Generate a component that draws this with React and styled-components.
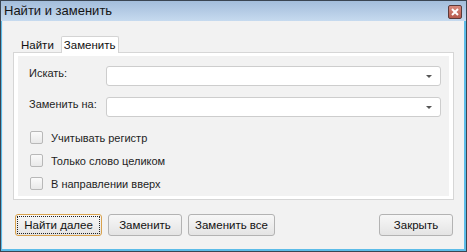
import React from 'react';
import styled, { createGlobalStyle } from 'styled-components';

const Global = createGlobalStyle`
  html, body {
    margin: 0;
    padding: 0;
    background: #f2f2f2;
  }
  body {
    font-family: "Liberation Sans", Arial, sans-serif;
    font-size: 11px;
    color: #1e1e1e;
  }
`;

const Window = styled.div`
  width: 467px;
  height: 252px;
  box-sizing: border-box;
  border: 1px solid #3a4552;
  display: flex;
  flex-direction: column;
  background: #5cbce8;
`;

const TitleBar = styled.div`
  height: 20px;
  flex: none;
  display: flex;
  align-items: center;
  justify-content: space-between;
  padding: 0 4px 0 3px;
  background: linear-gradient(#a3bddb, #c6daef);
`;

const Title = styled.div`
  font-size: 13px;
  color: #141414;
  padding-bottom: 1px;
`;

const CloseBtn = styled.div`
  width: 12px;
  height: 12px;
  margin-top: 2px;
  border: 1px solid #5b3a3a;
  border-radius: 2px;
  background: linear-gradient(#d98a7e, #b55a4c);
  display: flex;
  align-items: center;
  justify-content: center;
`;

const Body = styled.div`
  flex: 1;
  margin: 0 2px 2px 1px;
  background: #f2f2f2;
  border-left: 1px solid #e4ecf4;
  display: flex;
  flex-direction: column;
  padding: 14px 0 0 10px;
`;

const Tabs = styled.div`
  display: flex;
  align-items: flex-end;
  height: 17px;
  padding-left: 1px;
  position: relative;
  z-index: 1;
`;

const Tab = styled.div`
  height: ${p => (p.$active ? '17px' : '15px')};
  box-sizing: border-box;
  padding: ${p => (p.$active ? '1px 2px 0 2px' : '0 6px 0 6px')};
  line-height: 15px;
  font-size: 11.5px;
  background: ${p => (p.$active ? '#ffffff' : 'transparent')};
  border: 1px solid ${p => (p.$active ? '#d4d4d4' : 'transparent')};
  border-bottom: none;
  border-radius: 2px 2px 0 0;
  margin-bottom: ${p => (p.$active ? '-1px' : '0')};
  color: #111;
`;

const Panel = styled.div`
  width: 441px;
  height: 148px;
  box-sizing: border-box;
  border: 1px solid #d6d6d6;
  background: #ffffff;
  padding: 3px 4px 3px 4px;
`;

const Page = styled.div`
  height: 100%;
  background: #f2f2f2;
  box-sizing: border-box;
  padding: 10px 8px 0 11px;
  display: flex;
  flex-direction: column;
`;

const FieldRow = styled.div`
  display: flex;
  align-items: center;
  height: 20px;
  margin-bottom: 11px;
`;

const Label = styled.div`
  width: 77px;
  flex: none;
  padding-bottom: 6px;
`;

const Combo = styled.div`
  flex: 1;
  height: 20px;
  box-sizing: border-box;
  background: #ffffff;
  border: 1px solid #cdcdcd;
  border-radius: 3px;
  display: flex;
  align-items: center;
  justify-content: flex-end;
  padding-right: 8px;
`;

const Arrow = styled.div`
  width: 0;
  height: 0;
  border-left: 3px solid transparent;
  border-right: 3px solid transparent;
  border-top: 3px solid #555;
`;

const Checks = styled.div`
  display: flex;
  flex-direction: column;
  gap: 10px;
  margin-top: 3px;
`;

const CheckRow = styled.label`
  display: flex;
  align-items: center;
  height: 13px;
  gap: 8px;
  padding-left: 1px;
`;

const Box = styled.span`
  width: 11px;
  height: 11px;
  border: 1px solid #b8b8b8;
  border-radius: 2px;
  background: linear-gradient(#fafafa, #e9e9e9);
`;

const Buttons = styled.div`
  display: flex;
  gap: 6px;
  padding: 14px 11px 0 2px;
`;

const Button = styled.div`
  width: ${p => p.$w}px;
  height: 22px;
  box-sizing: border-box;
  border: 1px solid ${p => (p.$focus ? '#d9a24c' : '#b3b3b3')};
  border-radius: 3px;
  background: linear-gradient(#f7f7f7, #e4e4e4);
  display: flex;
  align-items: center;
  justify-content: center;
  position: relative;
  margin-left: ${p => (p.$push ? 'auto' : '0')};
  color: #111;
  font-size: 11.5px;
  &::after {
    content: '';
    display: ${p => (p.$focus ? 'block' : 'none')};
    position: absolute;
    inset: 1px;
    border: 1px dotted #222;
  }
`;

const checks = ['Учитывать регистр', 'Только слово целиком', 'В направлении вверх'];

export default function App() {
  return (
    <>
      <Global />
      <Window>
        <TitleBar>
          <Title>Найти и заменить</Title>
          <CloseBtn>
            <svg width="8" height="8" viewBox="0 0 8 8">
              <path d="M1 1L7 7M7 1L1 7" stroke="#fff" strokeWidth="2" />
            </svg>
          </CloseBtn>
        </TitleBar>
        <Body>
          <Tabs>
            <Tab>Найти</Tab>
            <Tab $active>Заменить</Tab>
          </Tabs>
          <Panel>
            <Page>
              <FieldRow>
                <Label>Искать:</Label>
                <Combo><Arrow /></Combo>
              </FieldRow>
              <FieldRow>
                <Label>Заменить на:</Label>
                <Combo><Arrow /></Combo>
              </FieldRow>
              <Checks>
                {checks.map(c => (
                  <CheckRow key={c}>
                    <Box />
                    {c}
                  </CheckRow>
                ))}
              </Checks>
            </Page>
          </Panel>
          <Buttons>
            <Button $w={87} $focus>Найти далее</Button>
            <Button $w={74}>Заменить</Button>
            <Button $w={87}>Заменить все</Button>
            <Button $w={74} $push>Закрыть</Button>
          </Buttons>
        </Body>
      </Window>
    </>
  );
}
